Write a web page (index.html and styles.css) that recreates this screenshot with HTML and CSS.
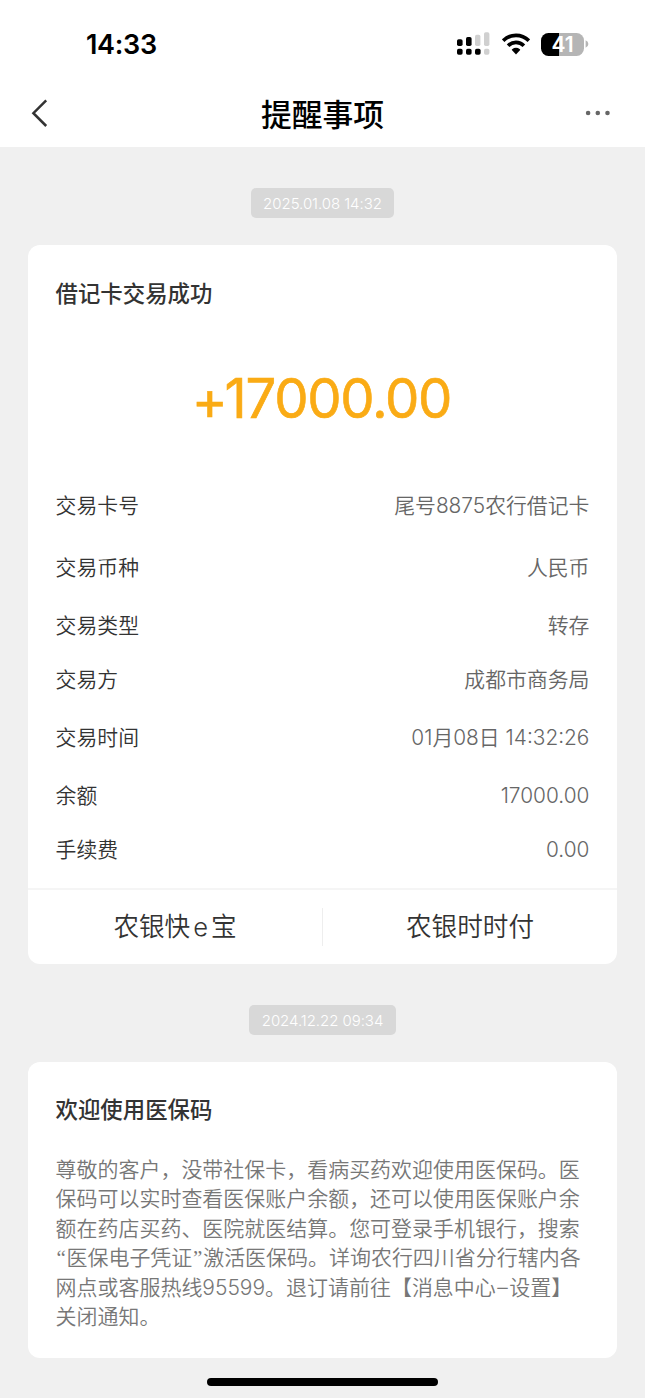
FILE: index.html
```html
<!DOCTYPE html>
<html lang="zh-CN">
<head>
<meta charset="utf-8">
<title>提醒事项</title>
<link rel="stylesheet" href="styles.css">
</head>
<body>
<div class="screen">
  <header class="top">
    <div class="status">
      <span class="clock">14:33</span>
      <div class="indicators">
        <svg class="signal" width="34" height="24" viewBox="0 0 34 24">
          <g fill="#000">
            <rect x="0" y="7.2" width="5.6" height="6.8" rx="1.7"/>
            <rect x="9" y="5" width="5.6" height="9" rx="1.7"/>
            <rect x="0" y="16.8" width="5.6" height="6" rx="1.7"/>
            <rect x="9" y="16.8" width="5.6" height="6" rx="1.7"/>
            <rect x="18" y="16.8" width="5.6" height="6" rx="1.7"/>
          </g>
          <g fill="#d0d0d0">
            <rect x="18" y="2.8" width="5.4" height="11.2" rx="1.7"/>
            <rect x="27" y="0.2" width="5.4" height="13.8" rx="1.7"/>
            <rect x="27" y="16.8" width="5.4" height="6" rx="1.7"/>
          </g>
        </svg>
        <svg class="wifi" width="28" height="22" viewBox="0 0 28 22">
          <g fill="none" stroke="#000" stroke-width="3.7">
            <path d="M1.1 7.7 A18.2 18.2 0 0 1 26.9 7.7"/>
            <path d="M6.1 12.7 A11.2 11.2 0 0 1 21.9 12.7"/>
          </g>
          <path d="M14 21.4 L9.8 17.1 Q9.6 16.6 10.1 16.2 Q14 13.5 17.9 16.2 Q18.4 16.6 18.2 17.1 Z" fill="#000"/>
        </svg>
        <div class="battery"><span class="level">41</span><svg width="4" height="8" viewBox="0 0 4 8"><path d="M0.6 0.3 Q3.4 1.6 3.4 4 Q3.4 6.4 0.6 7.7 Z" fill="#b5b5b5"/></svg></div>
      </div>
    </div>
    <nav class="nav">
      <svg width="18" height="30" viewBox="0 0 18 30"><path d="M15.2 2.3 L2.4 15.2 L15.2 28" fill="none" stroke="#333" stroke-width="2.5"/></svg>
      <h1>提醒事项</h1>
      <svg class="more" width="26" height="6" viewBox="0 0 26 6" fill="#666"><circle cx="3.1" cy="3" r="2.3"/><circle cx="12.8" cy="3" r="2.3"/><circle cx="22.5" cy="3" r="2.3"/></svg>
    </nav>
  </header>
  <main class="feed">
    <time class="stamp">2025.01.08 14:32</time>
    <section class="card">
      <h2>借记卡交易成功</h2>
      <div class="amount"><span class="sign">+</span>17000.00</div>
      <dl class="details">
        <div class="row tall"><dt>交易卡号</dt><dd>尾号8875农行借记卡</dd></div>
        <div class="row tall"><dt>交易币种</dt><dd>人民币</dd></div>
        <div class="row"><dt>交易类型</dt><dd>转存</dd></div>
        <div class="row"><dt>交易方</dt><dd>成都市商务局</dd></div>
        <div class="row tall"><dt>交易时间</dt><dd>01月08日 14:32:26</dd></div>
        <div class="row"><dt>余额</dt><dd>17000.00</dd></div>
        <div class="row"><dt>手续费</dt><dd>0.00</dd></div>
      </dl>
      <div class="actions">
        <div class="action">农银快<span class="latin">e</span>宝</div>
        <div class="action">农银时时付</div>
      </div>
    </section>
    <time class="stamp second">2024.12.22 09:34</time>
    <section class="card notice">
      <h2>欢迎使用医保码</h2>
      <p>尊敬的客户，没带社保卡，看病买药欢迎使用医保码。医<br>保码可以实时查看医保账户余额，还可以使用医保账户余<br>额在药店买药、医院就医结算。您可登录手机银行，搜索<br><span class="quote">“</span>医保电子凭证<span class="quote">”</span>激活医保码。详询农行四川省分行辖内各<br>网点或客服热线95599。退订请前往【消息中心<span class="dash">–</span>设置】<br>关闭通知。</p>
    </section>
  </main>
  <div class="home-bar"></div>
</div>
</body>
</html>
```
FILE: styles.css
```css
* { box-sizing: border-box; margin: 0; padding: 0; }
body {
  background: #f0f0f0;
  font-family: Inter, "Noto Sans CJK SC", sans-serif;
  color: #333;
}
svg { display: block; flex: none; }
.screen { display: flex; flex-direction: column; width: 645px; height: 1398px; overflow: hidden; }
.top { height: 147px; background: #fff; }
.status { display: flex; justify-content: space-between; height: 80px; padding: 8px 56px 0 86px; align-items: center; }
.clock { padding-top: 1px; font-size: 27px; font-weight: 600; line-height: 32px; letter-spacing: -0.3px; color: #000; }
.indicators { display: flex; align-items: center; }
.wifi { margin-left: 11px; }
.battery { display: flex; align-items: center; gap: 1px; margin-left: 11px; }
.level {
  width: 43px; height: 23px; border-radius: 7.5px;
  background: linear-gradient(90deg, #000 18px, #b5b5b5 18px);
  color: #fff; font-size: 21px; font-weight: 600; line-height: 23px; text-align: center;
}
.nav { display: grid; grid-template-columns: 1fr auto 1fr; align-items: center; height: 66px; padding: 0 34px 0 31px; }
.more { justify-self: end; }
h1 { padding: 4px 0 0 3px; font-size: 30.8px; font-weight: 500; line-height: 40px; color: #000; }
.feed { display: flex; flex-direction: column; align-items: center; padding: 41px 28px 0; }
.stamp {
  width: 143px; height: 30px; border-radius: 5px; background: #d8d8d8;
  color: #fff; font-size: 15px; font-weight: 300; line-height: 31px; letter-spacing: -0.05px; text-align: center; white-space: nowrap;
}
.stamp.second { width: 147px; margin-top: 41px; }
.card { width: 589px; height: 719px; margin-top: 27px; border-radius: 12px; background: #fff; overflow: hidden; }
h2 { padding: 31px 27.6px 0; font-size: 22.4px; font-weight: 500; line-height: 36px; }
.amount {
  margin-top: 51px; height: 70px; padding-right: 2px;
  color: #faab15; font-size: 54.5px; font-weight: 400; line-height: 70px; letter-spacing: -1.3px; text-align: center;
  -webkit-text-stroke: 0.6px #faab15;
}
.sign { position: relative; top: 2px; margin-right: -2px; }
.details { margin-top: 41px; }
.row { display: flex; align-items: center; justify-content: space-between; height: 54px; padding: 2px 27.6px 0; font-size: 20.85px; line-height: 30px; font-weight: 350; }
.row.tall { height: 62px; }
.actions { display: flex; align-items: center; height: 75px; margin-top: 12px; border-top: 2px solid #f5f5f5; }
dd { color: #666; }
.action { flex: 1; font-size: 25.6px; line-height: 38px; font-weight: 350; text-align: center; }
.action + .action { border-left: 1px solid #eee; }
.latin { margin: 0 3px; }
.notice { height: 296px; }
.notice h2 { padding-top: 30px; }
.notice p { margin-top: 27px; padding-left: 27.6px; color: #777; font-size: 20.97px; font-weight: 350; line-height: 29.4px; white-space: nowrap; }
.quote { display: inline-block; width: 10.9px; font-family: "Liberation Serif", serif; line-height: 1; text-align: center; }
.dash { display: inline-block; width: 13.5px; line-height: 1; text-align: center; }
.home-bar { width: 231px; height: 8px; margin: 20px auto 0; border-radius: 4px; background: #000; }
```
